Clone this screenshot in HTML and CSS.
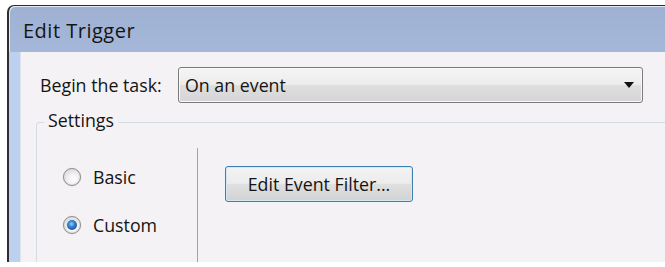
FILE: index.html
```html
<!DOCTYPE html>
<html lang="en">
  <head>
    <meta charset="UTF-8" />
    <meta name="viewport" content="width=device-width, initial-scale=1.0" />
    <title>Edit Trigger</title>
    <link rel="stylesheet" href="styles.css">
  </head>
  <body>
    <div class="window">
      <div class="titlebar">Edit Trigger</div>
      <div class="frame">
        <div class="client">
          <div class="task-row">
            <span class="task-label">Begin the task:</span>
            <div class="combo">
              <span>On an event</span>
              <svg class="combo-arrow" width="10" height="6" viewBox="0 0 10 6">
                <path d="M0 0 H10 L5 6 Z" fill="#111" />
              </svg>
            </div>
          </div>

          <fieldset class="group">
            <legend>Settings</legend>
            <div class="group-body">
              <div class="modes">
                <label class="option">
                  <span class="radio"></span>
                  <span>Basic</span>
                </label>
                <label class="option">
                  <span class="radio checked"></span>
                  <span>Custom</span>
                </label>
              </div>
              <div class="mode-panel">
                <button class="btn">Edit Event Filter...</button>
              </div>
            </div>
          </fieldset>
        </div>
      </div>
    </div>
  </body>
</html>
```

FILE: styles.css
```css
html,
body {
  margin: 0;
  overflow: hidden;
  background: #fff;
}
body {
  font-family: "Open Sans", "Noto Sans", sans-serif;
  font-size: 17.8px;
  line-height: 24px;
  color: #141414;
}
.window {
  margin: 5px 0 0 7px;
  width: 720px;
  height: 256px;
  display: flex;
  flex-direction: column;
  border-top: 1px solid #2e2e2e;
  border-left: 2px solid #2e2e2e;
  border-top-left-radius: 7px;
  background: linear-gradient(#9fb1d3, #c4d7f2);
  box-shadow: inset 1px 1px 0 #e4ebf6;
  overflow: hidden;
}
.titlebar {
  flex-shrink: 0;
  height: 33px;
  padding: 13px 0 0 14px;
  font-size: 20px;
  letter-spacing: 0.5px;
  color: #141414;
}
.frame {
  flex: 1;
  min-height: 0;
  padding-left: 11px;
  background: #bdd0ef;
}
.client {
  height: 100%;
  padding: 15px 0 0 16px;
  box-sizing: border-box;
  background: #f5f2f5;
  box-shadow: inset 1px 0 0 #dfe3ec;
  overflow: hidden;
}
.task-row {
  display: flex;
  align-items: center;
  margin-left: 4px;
}
.task-label {
  width: 138px;
}
.combo {
  flex-shrink: 0;
  width: 465px;
  height: 36px;
  box-sizing: border-box;
  display: flex;
  align-items: center;
  justify-content: space-between;
  padding: 0 8px 0 6px;
  border: 1px solid #7b7b7b;
  border-radius: 3px;
  background: linear-gradient(#f4f4f4 0%, #ededed 48%, #dedede 52%, #d6d6d6 100%);
  box-shadow: inset 0 0 0 1px #f8f8f8;
}
.group {
  margin: 7px 0 0 0;
  padding: 14px 0 0 7px;
  height: 160px;
  border: 1px solid #d3dbe3;
  border-radius: 3px;
  min-width: 0;
}
.group legend {
  padding: 0 4px 4px;
  line-height: 20px;
}
.group-body {
  display: flex;
  height: 100%;
}
.modes {
  flex-shrink: 0;
  width: 154px;
  border-right: 1px solid #a3a3a3;
  padding: 17px 0 0 19px;
  box-sizing: border-box;
  display: flex;
  flex-direction: column;
  gap: 24px;
}
.option {
  display: flex;
  align-items: center;
  gap: 12px;
  height: 24px;
}
.radio {
  width: 18px;
  height: 18px;
  box-sizing: border-box;
  border-radius: 50%;
  border: 1px solid #8c8c8c;
  background: radial-gradient(circle at 60% 65%, #ffffff 0%, #efefef 45%, #c6c6c6 100%);
  box-shadow: 0 0 1px #bdbdbd, inset 0 0 0 1px #e6e6e6;
  display: flex;
  align-items: center;
  justify-content: center;
}
.radio.checked::after {
  content: "";
  width: 10px;
  height: 10px;
  border-radius: 50%;
  background: radial-gradient(circle at 45% 40%, #8ccff7 0%, #2e7fcc 40%, #0d3a78 100%);
}
.mode-panel {
  padding: 18px 0 0 27px;
}
.btn {
  width: 188px;
  height: 36px;
  font: inherit;
  color: #141414;
  border: 1px solid #3c7fb1;
  border-radius: 3px;
  background: linear-gradient(#f3f3f3 0%, #ececec 48%, #dfdfdf 52%, #d3d3d3 100%);
  box-shadow: inset 0 0 0 1px #cfe9f8;
  padding: 0;
}
```
